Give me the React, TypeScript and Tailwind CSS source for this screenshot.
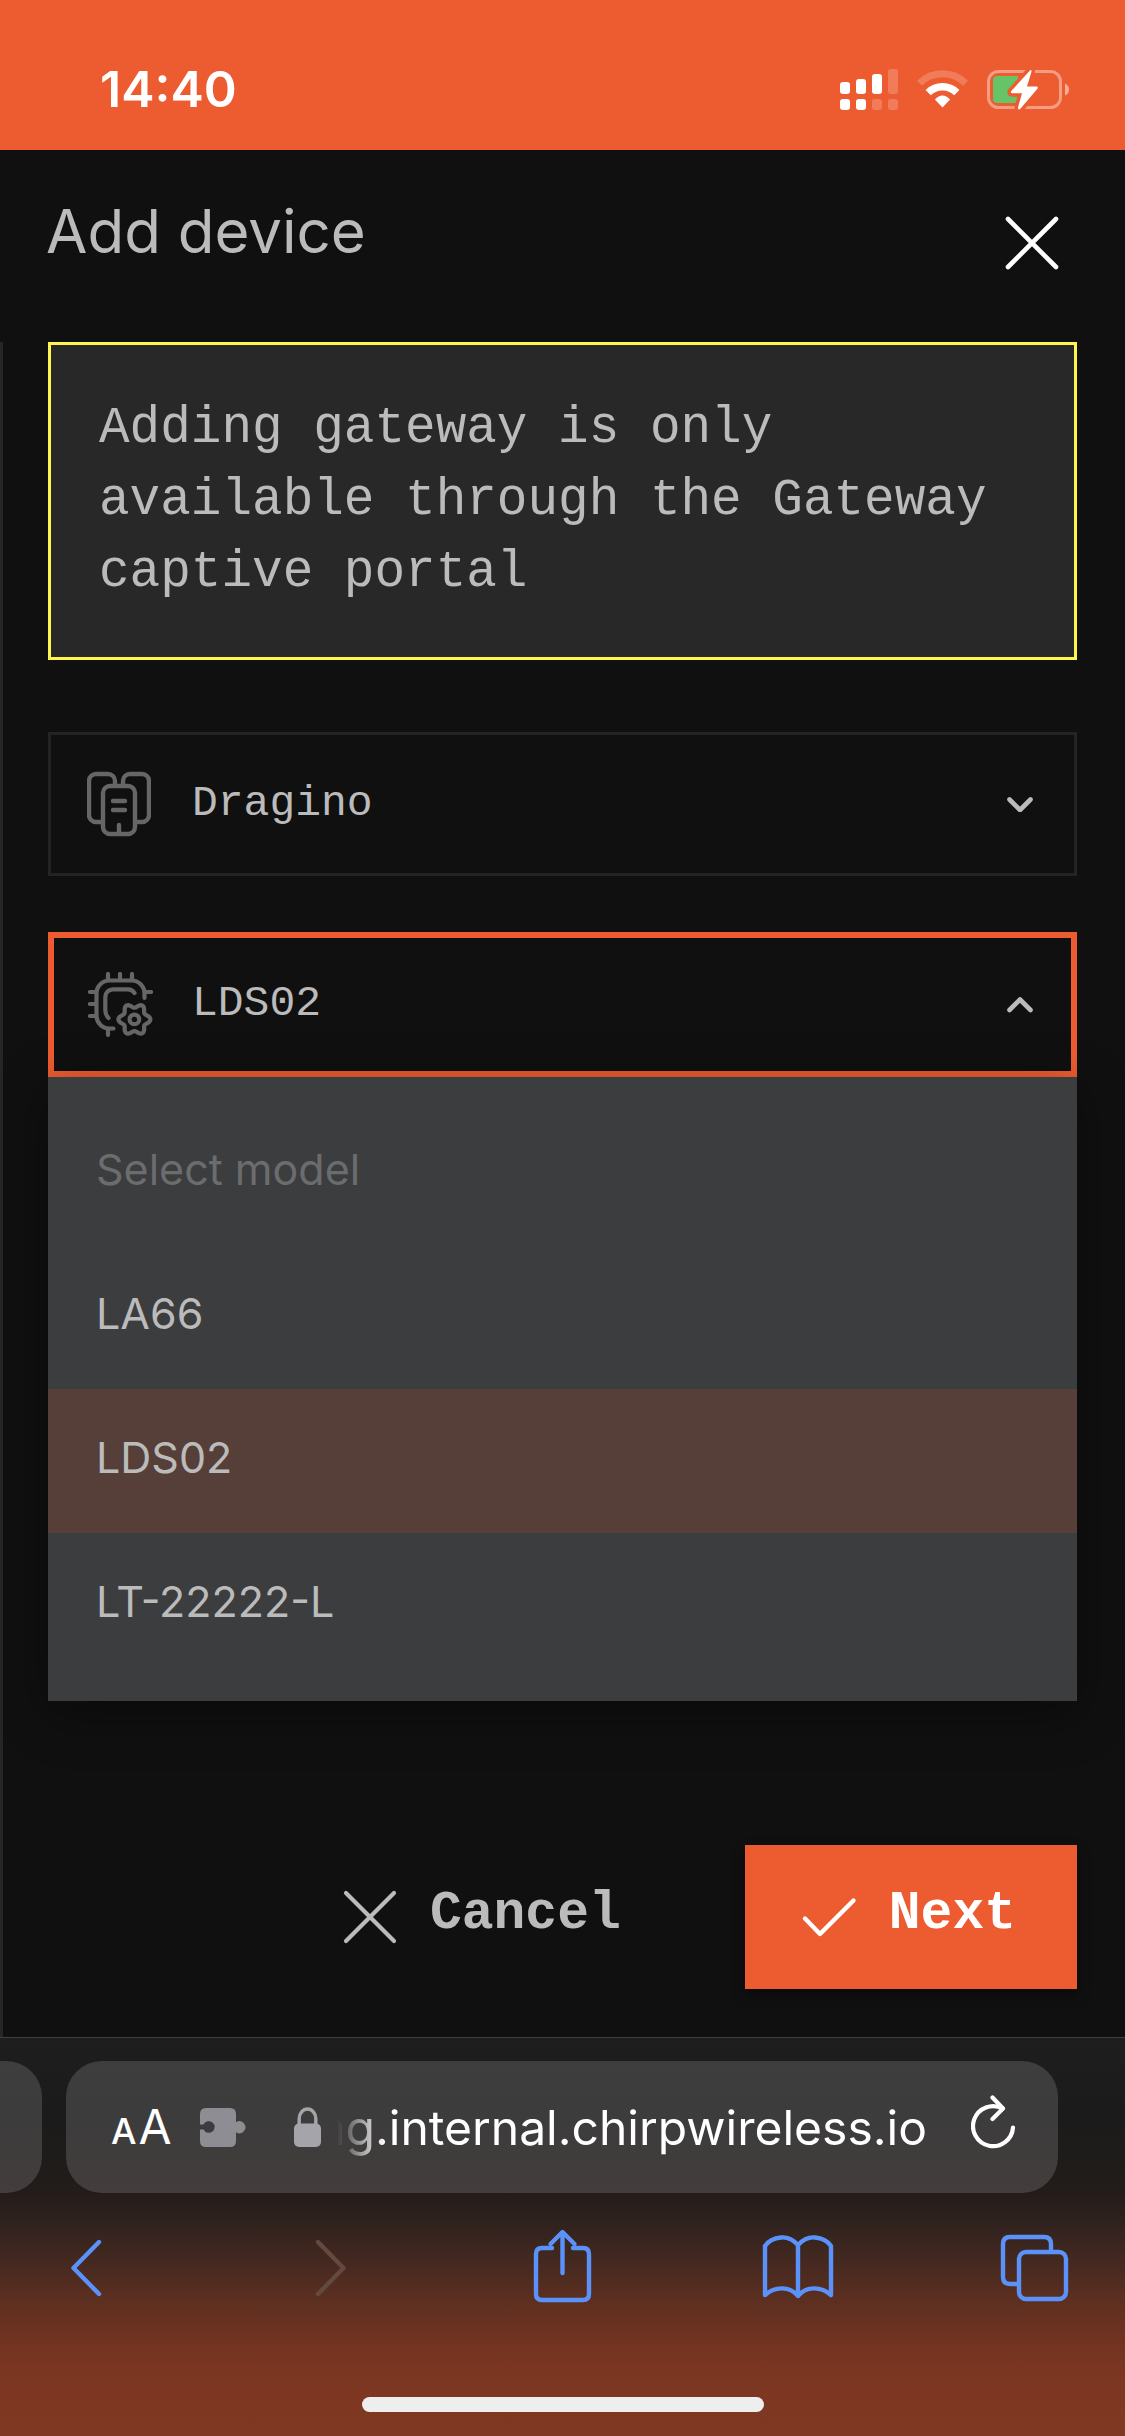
import React, { useState } from "react";

const MODELS = ["LA66", "LDS02", "LT-22222-L"];

const MONO = "font-['Liberation_Mono',monospace]";

const gearPath = (() => {
  const points: string[] = [];
  for (let i = 0; i < 72; i++) {
    const a = (i / 72) * Math.PI * 2;
    const r = 13.8 + 2.2 * Math.cos(6 * a);
    points.push(`${(46.4 + r * Math.cos(a)).toFixed(2)} ${(47.4 + r * Math.sin(a)).toFixed(2)}`);
  }
  return `M${points.join("L")}Z`;
})();

function SignalIcon() {
  return (
    <svg width="58" height="41" viewBox="0 0 58 41" fill="#fff" aria-hidden="true">
      <rect x="0" y="13" width="10" height="12" rx="3" />
      <rect x="16" y="10" width="10" height="15" rx="3" />
      <rect x="32" y="5" width="10" height="20" rx="3" />
      <rect x="48" y="0" width="10" height="25" rx="3" opacity=".2" />
      <rect x="0" y="30" width="10" height="11" rx="3" />
      <rect x="16" y="30" width="10" height="11" rx="3" />
      <rect x="32" y="30" width="10" height="11" rx="3" opacity=".2" />
      <rect x="48" y="30" width="10" height="11" rx="3" opacity=".2" />
    </svg>
  );
}

function WifiIcon() {
  return (
    <svg width="51" height="38" viewBox="0 0 51 38" fill="none" aria-hidden="true">
      <path d="M2.5 13.2A33 33 0 0 1 48.5 13.2" stroke="#fff" strokeOpacity=".2" strokeWidth="7" />
      <path d="M11.2 22.6A20.5 20.5 0 0 1 39.8 22.6" stroke="#fff" strokeWidth="7.4" />
      <path d="M25.5 37.5L17.9 29.6Q25.5 21.6 33.1 29.6Z" fill="#fff" />
    </svg>
  );
}

function BatteryIcon() {
  const bolt =
    "M43.2 1.2L24.5 21.8Q22.8 24.2 25.5 24.2H35L31 38.4Q31 41.8 33.6 39.6L50.2 20Q51.8 17.6 49.2 17.6H40L44.4 3Q44.8 .4 43.2 1.2Z";
  return (
    <svg width="82" height="41" viewBox="0 0 82 41" fill="none" aria-hidden="true">
      <rect x="1.5" y="2.5" width="72" height="36" rx="10" stroke="#fff" strokeOpacity=".4" strokeWidth="3" />
      <path d="M78 14.5Q82 16.5 82 20.5T78 26.5Z" fill="#fff" fillOpacity=".5" />
      <path d="M10 7H31V34H10Q6 34 6 30V11Q6 7 10 7Z" fill="#67c466" />
      <path d={bolt} fill="#ed5c30" stroke="#ed5c30" strokeWidth="7" strokeLinejoin="round" />
      <path d={bolt} fill="#fff" />
    </svg>
  );
}

function CrossIcon({ width }: { width: number }) {
  return (
    <svg width="72" height="72" viewBox="0 0 72 72" fill="none" stroke="currentColor" strokeWidth={width} strokeLinecap="round" aria-hidden="true">
      <path d="M12 12L60 60M60 12L12 60" />
    </svg>
  );
}

function CheckIcon() {
  return (
    <svg width="72" height="72" viewBox="0 0 72 72" fill="none" stroke="currentColor" strokeWidth="4.4" strokeLinecap="round" strokeLinejoin="round" aria-hidden="true">
      <path d="M12 37.5L27 53L60.5 19.5" />
    </svg>
  );
}

function VendorIcon() {
  return (
    <svg width="64" height="66" viewBox="0 0 64 66" fill="none" stroke="#666" strokeWidth="4.4" strokeLinecap="round" strokeLinejoin="round" aria-hidden="true">
      <path d="M28 13V10A7 7 0 0 0 21 3H9A7 7 0 0 0 2 10V44A7 7 0 0 0 9 51H15" />
      <path d="M36 13V10A7 7 0 0 1 43 3H55A7 7 0 0 1 62 10V44A7 7 0 0 1 55 51H49" />
      <rect x="16" y="15" width="32" height="48" rx="7" />
      <path d="M26 30H38M26 39H38M32 54V62" />
    </svg>
  );
}

function ModelIcon() {
  return (
    <svg width="65" height="66" viewBox="0 0 65 66" fill="none" stroke="#666" strokeWidth="4.2" strokeLinecap="round" strokeLinejoin="round" aria-hidden="true">
      <path d="M20 2V8M32 2V8M44 2V8M2 20H8M2 32H8M2 44H8M57 20H63M20 57V63" />
      <path d="M56.5 26V21.5A13 13 0 0 0 43.5 8.5H21.5A13 13 0 0 0 8.5 21.5V43.5A13 13 0 0 0 21.5 56.5H25.5" />
      <path d="M20.5 46Q17.3 43 17.3 38V25A7.7 7.7 0 0 1 25 17.3H40Q44.5 17.3 46.5 21" />
      <path d={gearPath} />
      <circle cx="46.4" cy="47.4" r="4.8" />
    </svg>
  );
}

function Chevron({ up = false }: { up?: boolean }) {
  return (
    <svg width="26" height="16" viewBox="0 0 26 16" fill="none" stroke="#bbb" strokeWidth="4.6" strokeLinecap="round" strokeLinejoin="round" aria-hidden="true">
      <path d={up ? "M2.5 13L13 2.5L23.5 13" : "M2.5 3.5L13 14L23.5 3.5"} />
    </svg>
  );
}

function PuzzleIcon() {
  return (
    <svg width="47" height="39" viewBox="0 0 47 39" fill="#8e8d93" aria-hidden="true">
      <path d="M6 0H30Q36 0 36 6V14.2A6 6 0 1 1 36 24.2V33Q36 39 30 39H6Q0 39 0 33V21.5H3.6A5.8 5.8 0 1 0 3.6 16.5H0V6Q0 0 6 0Z" />
    </svg>
  );
}

function LockIcon() {
  return (
    <svg width="27" height="40" viewBox="0 0 27 40" aria-hidden="true">
      <path d="M5.2 18V11.5A8.3 9.5 0 0 1 21.8 11.5V18" fill="none" stroke="#a5a4aa" strokeWidth="3.4" />
      <rect x="0" y="16.5" width="27" height="23.5" rx="5" fill="#a5a4aa" />
    </svg>
  );
}

function ReloadIcon() {
  return (
    <svg width="45" height="56" viewBox="0 0 45 56" fill="none" stroke="#fff" strokeWidth="4.2" strokeLinecap="round" strokeLinejoin="round" aria-hidden="true">
      <path d="M42 32.5A20 20 0 1 1 31.5 13.5" />
      <path d="M21.5 2.5L32 13.5L21.5 24" />
    </svg>
  );
}

function NavButton({ label, disabled, children }: { label: string; disabled?: boolean; children: React.ReactNode }) {
  return (
    <button type="button" aria-label={label} disabled={disabled} className="flex size-24 items-center justify-center">
      <svg width="96" height="96" viewBox="0 0 96 96" fill="none" stroke={disabled ? "#64493f" : "#5b92fa"} strokeWidth="4.4" strokeLinecap="round" strokeLinejoin="round" aria-hidden="true">
        {children}
      </svg>
    </button>
  );
}

function BrowserBar() {
  return (
    <footer className="border-t border-[#404040] bg-[linear-gradient(to_bottom,#1e1e1e_0%,#1b1b1b_18%,#1f1c1a_33%,#241c1b_39%,#2f221e_46%,#462920_57%,#5d2f20_66%,#713321_76%,#7b3621_84%,#803822_100%)]">
      <div className="flex h-[155px] items-end gap-6 pr-[67px]">
        <div className="h-[132px] w-[42px] rounded-r-[36px] bg-white/15" />
        <div className="flex h-[132px] min-w-0 flex-1 items-center rounded-[36px] bg-white/15 pl-[45px] pr-[42px] text-white">
          <button type="button" aria-label="Page settings" className="flex items-baseline gap-[2px] leading-none">
            <span className="text-[36px] font-medium">A</span>
            <span className="text-[48px]">A</span>
          </button>
          <button type="button" aria-label="Extensions" className="ml-7">
            <PuzzleIcon />
          </button>
          <span className="ml-[47px]">
            <LockIcon />
          </span>
          <button type="button" aria-label="Address" className="ml-4 flex min-w-0 flex-1 justify-end overflow-hidden whitespace-nowrap pt-[2px] text-[48px] leading-[72px] [mask-image:linear-gradient(to_right,transparent,black_48px)]">
            ng.internal.chirpwireless.io
          </button>
          <button type="button" aria-label="Reload" className="ml-[44px] pb-2">
            <ReloadIcon />
          </button>
        </div>
      </div>
      <nav aria-label="Browser" className="mt-[27px] flex justify-between pl-[39px] pr-[42px]">
        <NavButton label="Back">
          <path d="M60 22L34.5 48L60 74" />
        </NavButton>
        <NavButton label="Forward" disabled>
          <path d="M42 22L67.5 48L42 74" />
        </NavButton>
        <NavButton label="Share">
          <path d="M39 28H29Q23 28 23 34V74Q23 80 29 80H70Q76 80 76 74V34Q76 28 70 28H60" />
          <path d="M49.5 53V13M37.5 24L49.5 12L61.5 24" />
        </NavButton>
        <NavButton label="Bookmarks">
          <path d="M48 25C42 18.5 36 17 31 17.5Q20 18.5 15 26V75C25 66 40 66 48 76C56 66 71 66 81 75V26Q76 18.5 65 17.5C60 17 54 18.5 48 25ZM48 25V76" />
        </NavButton>
        <NavButton label="Tabs">
          <path d="M31 64H23Q16 64 16 57V24Q16 17 23 17H57Q64 17 64 24V31" />
          <rect x="32" y="32" width="47" height="47" rx="7" />
        </NavButton>
      </nav>
      <div className="mx-auto mb-6 mt-[81px] h-[15px] w-[402px] rounded-full bg-[#eee]" />
    </footer>
  );
}

export default function App() {
  const [vendor, setVendor] = useState("Dragino");
  const [model, setModel] = useState("LDS02");
  const [open, setOpen] = useState(true);

  return (
    <div className="flex min-h-screen flex-col bg-[#101010] font-[Inter,sans-serif] text-[#bbb]">
      <header className="flex h-[150px] items-center justify-between bg-[#ed5c30] pl-[100px] pr-14 pt-7 text-white">
        <time className="text-[50px] font-semibold leading-none">14:40</time>
        <div className="flex items-center gap-[19px]">
          <SignalIcon />
          <WifiIcon />
          <BatteryIcon />
        </div>
      </header>

      <main className="flex flex-1 flex-col">
        <div className="flex h-48 items-start justify-between pl-[46px] pr-[57px]">
          <h1 className="pt-[45px] text-[60px] leading-[72px]">Add device</h1>
          <button type="button" aria-label="Close" className="mt-[57px] text-white">
            <CrossIcon width={4.6} />
          </button>
        </div>

        <form className="flex flex-1 flex-col border-l-[3px] border-[#262626] pb-12 pl-[45px] pr-12" onSubmit={(e) => e.preventDefault()}>
          <p className={`border-[3px] border-[#fff54f] bg-[#282828] p-12 text-[51px] leading-[72px] ${MONO}`}>
            Adding gateway is only available through the Gateway captive portal
          </p>

          <label className="mt-[72px] flex h-36 items-center border-[3px] border-[#242424] pl-9 pr-[41px]">
            <VendorIcon />
            <select
              aria-label="Vendor"
              value={vendor}
              onChange={(e) => setVendor(e.target.value)}
              className={`ml-[41px] h-full flex-1 appearance-none bg-transparent text-[43px] outline-none ${MONO}`}
            >
              <option>Dragino</option>
            </select>
            <Chevron />
          </label>

          <button
            type="button"
            aria-haspopup="listbox"
            aria-expanded={open}
            aria-controls="models"
            onClick={() => setOpen(!open)}
            className="mt-14 flex h-[145px] items-center border-[6px] border-[#ed5c30] pl-[34px] pr-[38px]"
          >
            <ModelIcon />
            <span className={`ml-[39px] flex-1 text-left text-[43px] ${MONO}`}>{model}</span>
            <Chevron up={open} />
          </button>

          {open && (
            <ul id="models" role="listbox" aria-label="Model" className="bg-[#3c3d3f] py-6 text-[43px] shadow-[0_12px_48px_rgba(0,0,0,0.4)]">
              <li role="option" aria-disabled="true" aria-selected="false" className="flex h-36 items-center px-12 pb-2 text-[#6b6c6e]">
                Select model
              </li>
              {MODELS.map((name) => (
                <li
                  key={name}
                  role="option"
                  aria-selected={name === model}
                  onClick={() => setModel(name)}
                  className={`flex h-36 items-center px-12 pb-2 ${name === model ? "bg-[#573f39]" : ""}`}
                >
                  {name}
                </li>
              ))}
            </ul>
          )}

          <div className={`mt-auto flex justify-end gap-[76px] pt-12 text-[53px] font-bold ${MONO}`}>
            <button type="button" className="flex h-36 items-center gap-6 px-12">
              <CrossIcon width={4.2} />
              <span className="pb-1">Cancel</span>
            </button>
            <button type="submit" className="flex h-36 items-center gap-6 bg-[#ed5c30] pl-12 pr-[61px] text-white shadow-[0_6px_12px_rgba(0,0,0,0.4)]">
              <CheckIcon />
              <span className="pb-1">Next</span>
            </button>
          </div>
        </form>
      </main>

      <BrowserBar />
    </div>
  );
}
